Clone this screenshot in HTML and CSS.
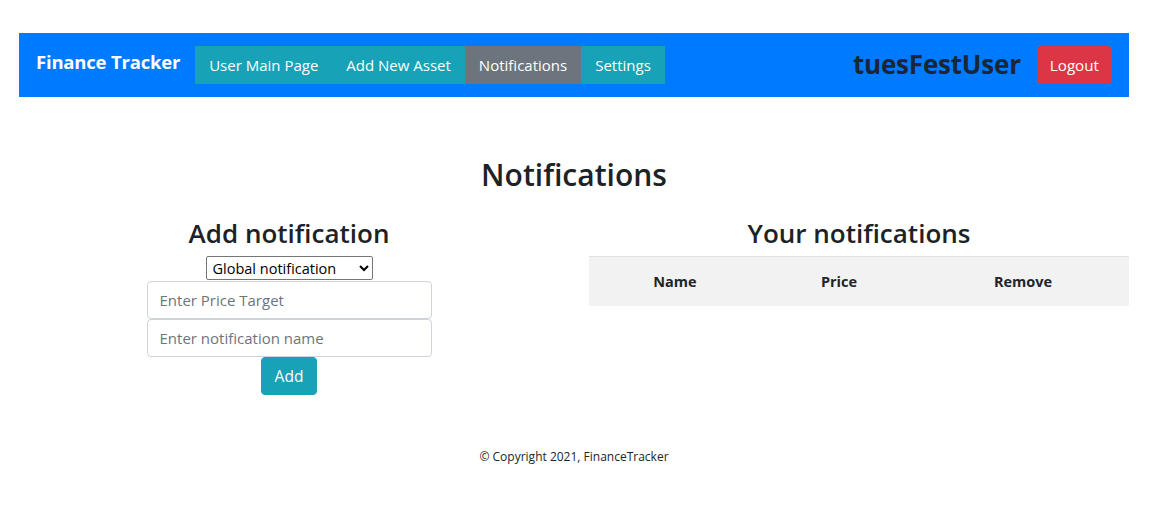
FILE: index.html
```html
<!DOCTYPE html>
<html lang="en">
<head>
<meta charset="utf-8">
<title>Finance Tracker - Notifications</title>
<link rel="stylesheet" href="styles.css">
</head>
<body>
<div class="container">
  <nav class="navbar">
    <a class="brand" href="#">Finance Tracker</a>
    <ul class="nav-links">
      <li><a href="#">User Main Page</a></li>
      <li><a href="#">Add New Asset</a></li>
      <li class="active"><a href="#">Notifications</a></li>
      <li><a href="#">Settings</a></li>
    </ul>
    <div class="nav-right">
      <span class="username">tuesFestUser</span>
      <button class="btn-logout">Logout</button>
    </div>
  </nav>

  <h1 class="page-title">Notifications</h1>

  <div class="row">
    <section class="col col-left">
      <h2 class="section-title">Add notification</h2>
      <select class="type-select">
        <option>Global notification</option>
      </select>
      <input class="text-input" type="text" placeholder="Enter Price Target">
      <input class="text-input" type="text" placeholder="Enter notification name">
      <button class="btn-add">Add</button>
    </section>
    <section class="col col-right">
      <h2 class="section-title">Your notifications</h2>
      <table class="notif-table">
        <thead>
          <tr>
            <th class="c-name">Name</th>
            <th class="c-price">Price</th>
            <th class="c-remove">Remove</th>
          </tr>
        </thead>
        <tbody></tbody>
      </table>
    </section>
  </div>

  <footer class="footer">© Copyright 2021, FinanceTracker</footer>
</div>
</body>
</html>
```

FILE: styles.css
```css
* { box-sizing: border-box; }

body {
  margin: 0;
  font-family: "Open Sans", "Noto Sans", sans-serif;
  color: #212529;
  background: #fff;
}

.container {
  width: 1110px;
  margin: 0 0 0 19px;
  padding-top: 33px;
}

.navbar {
  height: 64px;
  background: #007bff;
  display: flex;
  align-items: center;
  padding: 0 17px;
}

.brand {
  color: #fff;
  font-weight: 700;
  font-size: 18.5px;
  text-decoration: none;
  margin-right: 15px;
  padding-bottom: 7px;
  letter-spacing: -0.2px;
}

.nav-links {
  list-style: none;
  margin: 0;
  padding: 0;
  display: flex;
  background: #17a2b8;
  height: 38px;
}

.nav-links li { display: flex; }

.nav-links a {
  display: flex;
  align-items: center;
  padding: 0 14px;
  color: #fff;
  text-decoration: none;
  font-size: 15px;
}

.nav-links li.active a { background: #6c757d; }

.nav-right {
  margin-left: auto;
  display: flex;
  align-items: center;
  gap: 16px;
}

.username {
  font-size: 26px;
  font-weight: 700;
  color: #1b2633;
  letter-spacing: -0.2px;
  padding-bottom: 2px;
}

.btn-logout {
  font-family: inherit;
  background: #dc3545;
  color: #fff;
  border: 1px solid #dc3545;
  border-radius: 4px;
  height: 38px;
  padding: 0 12px;
  font-size: 15.2px;
}

.page-title {
  margin: 59px 0 0;
  text-align: center;
  font-size: 30px;
  font-weight: 600;
  line-height: 38px;
  color: #1d2227;
}

.row {
  display: flex;
  gap: 30px;
  margin-top: 22px;
}

.col {
  flex: 1 1 0;
  display: flex;
  flex-direction: column;
  align-items: center;
}

.section-title {
  margin: 0 0 6px;
  font-size: 26px;
  font-weight: 600;
  line-height: 34px;
  text-align: center;
  color: #1d2227;
}

.type-select {
  font-family: inherit;
  font-size: 14.5px;
  width: 167px;
  height: 24px;
  padding: 0 2px;
  border: 1px solid #767676;
  border-radius: 2px;
  background: #fff;
  color: #000;
}

.text-input {
  font-family: inherit;
  width: 285px;
  height: 38px;
  border: 1px solid #ced4da;
  border-radius: 4px;
  padding: 0 12px;
  font-size: 15px;
  color: #495057;
}
.text-input:first-of-type { margin-top: 1px; }
.text-input::placeholder { color: #6c757d; }

.btn-add {
  font-family: inherit;
  background: #17a2b8;
  color: #fff;
  border: 1px solid #17a2b8;
  border-radius: 4px;
  height: 38px;
  width: 56px;
  font-size: 15.5px;
}

.notif-table {
  width: 100%;
  border-collapse: collapse;
}

.notif-table thead tr {
  background: #f2f2f2;
}

.notif-table th {
  height: 49px;
  border-top: 1px solid #dee2e6;
  font-size: 14.5px;
  font-weight: 700;
  text-align: center;
  vertical-align: middle;
}

.c-name { width: 172px; }
.c-price { width: 156px; }
.c-remove { width: 212px; }

.footer {
  margin-top: 53px;
  text-align: center;
  font-size: 12px;
  color: #212529;
}
```
